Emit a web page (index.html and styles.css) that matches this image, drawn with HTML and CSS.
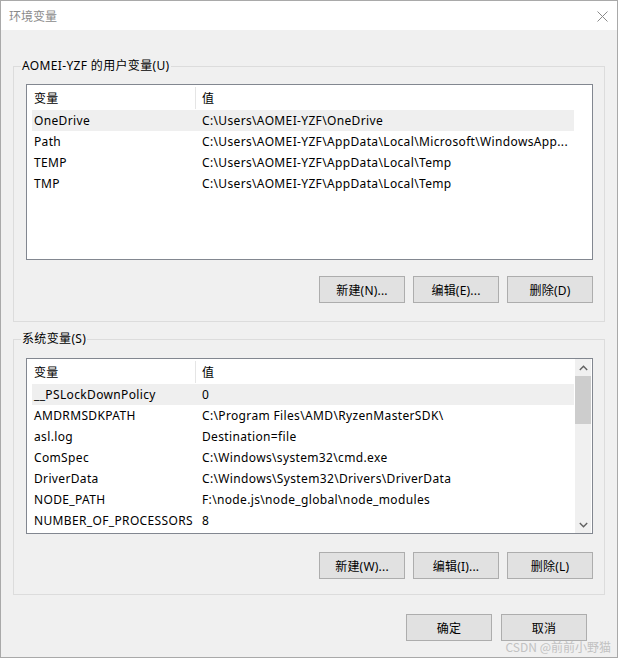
FILE: index.html
```html
<!DOCTYPE html>
<html lang="zh-CN">
<head>
<meta charset="utf-8">
<title>环境变量</title>
<link rel="stylesheet" href="styles.css">
</head>
<body>
<div class="window">
  <div class="titlebar">
    <span class="title">环境变量</span>
    <svg class="close" width="11" height="11" viewBox="0 0 11 11"><path d="M0.5 0.5 L10.5 10.5 M10.5 0.5 L0.5 10.5" stroke="#8a8a8a" stroke-width="1" fill="none"/></svg>
  </div>
  <div class="body">
    <section class="group">
      <span class="legend">AOMEI-YZF 的用户变量(U)</span>
      <div class="list">
        <div class="list-main list-main-full">
          <div class="list-head"><span class="hcol1">变量</span><span class="hcol2">值</span></div>
          <div class="row sel"><span class="c1">OneDrive</span><span class="c2">C:\Users\AOMEI-YZF\OneDrive</span></div>
          <div class="row"><span class="c1">Path</span><span class="c2">C:\Users\AOMEI-YZF\AppData\Local\Microsoft\WindowsApp...</span></div>
          <div class="row"><span class="c1">TEMP</span><span class="c2">C:\Users\AOMEI-YZF\AppData\Local\Temp</span></div>
          <div class="row"><span class="c1">TMP</span><span class="c2">C:\Users\AOMEI-YZF\AppData\Local\Temp</span></div>
        </div>
      </div>
      <div class="btns">
        <button class="btn">新建(N)...</button>
        <button class="btn">编辑(E)...</button>
        <button class="btn">删除(D)</button>
      </div>
    </section>
    <section class="group group2">
      <span class="legend">系统变量(S)</span>
      <div class="list">
        <div class="list-main">
          <div class="list-head"><span class="hcol1">变量</span><span class="hcol2">值</span></div>
          <div class="row sel"><span class="c1">__PSLockDownPolicy</span><span class="c2">0</span></div>
          <div class="row"><span class="c1">AMDRMSDKPATH</span><span class="c2">C:\Program Files\AMD\RyzenMasterSDK\</span></div>
          <div class="row"><span class="c1">asl.log</span><span class="c2">Destination=file</span></div>
          <div class="row"><span class="c1">ComSpec</span><span class="c2">C:\Windows\system32\cmd.exe</span></div>
          <div class="row"><span class="c1">DriverData</span><span class="c2">C:\Windows\System32\Drivers\DriverData</span></div>
          <div class="row"><span class="c1">NODE_PATH</span><span class="c2">F:\node.js\node_global\node_modules</span></div>
          <div class="row"><span class="c1">NUMBER_OF_PROCESSORS</span><span class="c2">8</span></div>
        </div>
        <div class="scrollbar">
          <div class="sb-arrow"><svg width="9" height="6" viewBox="0 0 9 6"><path d="M0.8 5 L4.5 1.3 L8.2 5" stroke="#606060" stroke-width="1.4" fill="none"/></svg></div>
          <div class="sb-thumb"></div>
          <div class="sb-track"></div>
          <div class="sb-arrow"><svg width="9" height="6" viewBox="0 0 9 6"><path d="M0.8 1 L4.5 4.7 L8.2 1" stroke="#606060" stroke-width="1.4" fill="none"/></svg></div>
        </div>
      </div>
      <div class="btns">
        <button class="btn">新建(W)...</button>
        <button class="btn">编辑(I)...</button>
        <button class="btn">删除(L)</button>
      </div>
    </section>
    <div class="footer">
      <button class="btn">确定</button>
      <button class="btn">取消</button>
    </div>
  </div>
  <div class="watermark">CSDN @前前小野猫</div>
</div>
</body>
</html>
```

FILE: styles.css
```css
html, body {
  margin: 0;
  padding: 0;
  background: #ffffff;
}
body {
  font-family: "Noto Sans", "Noto Sans CJK SC", sans-serif;
  font-size: 12px;
  color: #000;
  letter-spacing: 0.35px;
}
.window {
  width: 618px;
  height: 658px;
  box-sizing: border-box;
  border: 1px solid #a9a9a9;
  background: #f0f0f0;
  position: relative;
  display: flex;
  flex-direction: column;
}
.titlebar {
  height: 29px;
  flex: none;
  background: #fff;
  display: flex;
  align-items: center;
  justify-content: space-between;
  padding: 0 9px 0 8px;
}
.title {
  color: #8a8a8a;
  font-family: "Noto Sans CJK SC", sans-serif;
  font-size: 12px;
  line-height: 16px;
  letter-spacing: 0;
}
.close {
  display: block;
  margin-top: 1px;
}
.body {
  padding: 0 12px;
  display: flex;
  flex-direction: column;
}
.group {
  margin-top: 36px;
  height: 256px;
  box-sizing: border-box;
  border: 1px solid #dcdcdc;
  position: relative;
  padding: 17px 11px 0 12px;
}
.group2 {
  margin-top: 17px;
  padding-top: 18px;
}
.legend {
  position: absolute;
  left: 7px;
  top: -9px;
  padding: 0 1px;
  background: #f0f0f0;
  line-height: 16px;
  white-space: nowrap;
}
.list {
  height: 176px;
  box-sizing: border-box;
  border: 1px solid #828790;
  background: #fff;
  display: flex;
  overflow: hidden;
}
.list-main {
  flex: 1;
  min-width: 0;
  padding: 0 1px 0 5px;
  overflow: hidden;
}
.list-main-full {
  padding-right: 18px;
}
.list-head {
  height: 25px;
  display: flex;
  align-items: stretch;
}
.hcol1 {
  width: 164px;
  box-sizing: border-box;
  padding-left: 2px;
  border-right: 1px solid #e5e5e5;
  margin: 2px 0 1px;
  display: flex;
  align-items: center;
}
.hcol2 {
  padding-left: 6px;
  display: flex;
  align-items: center;
}
.row {
  height: 21px;
  display: flex;
  align-items: center;
  white-space: nowrap;
}
.row.sel {
  background: #efefef;
}
.c1 {
  width: 170px;
  flex: none;
  box-sizing: border-box;
  padding-left: 2px;
  overflow: hidden;
}
.c2 {
  flex: 1;
  min-width: 0;
}
.scrollbar {
  width: 16px;
  margin-right: 1px;
  background: #f0f0f0;
  display: flex;
  flex-direction: column;
}
.sb-arrow {
  height: 17px;
  display: flex;
  align-items: center;
  justify-content: center;
}
.sb-thumb {
  height: 48px;
  background: #cdcdcd;
}
.sb-track {
  flex: 1;
}
.btns {
  display: flex;
  justify-content: flex-end;
  gap: 8px;
  margin-top: 16px;
}
.group2 .btns {
  margin-top: 18px;
}
.btn {
  width: 86px;
  height: 27px;
  box-sizing: border-box;
  border: 1px solid #adadad;
  background: #e1e1e1;
  font-family: "Noto Sans", "Noto Sans CJK SC", sans-serif;
  font-size: 12px;
  letter-spacing: 0.2px;
  color: #000;
  padding: 0;
  margin: 0;
}
.footer {
  display: flex;
  justify-content: flex-end;
  gap: 9px;
  margin-top: 19px;
  padding-right: 18px;
}
.watermark {
  position: absolute;
  right: 6px;
  bottom: 3px;
  color: #c2c2c2;
  font-family: "Noto Sans CJK SC", sans-serif;
  font-size: 12px;
  line-height: 14px;
  letter-spacing: 0;
  white-space: nowrap;
}
```
